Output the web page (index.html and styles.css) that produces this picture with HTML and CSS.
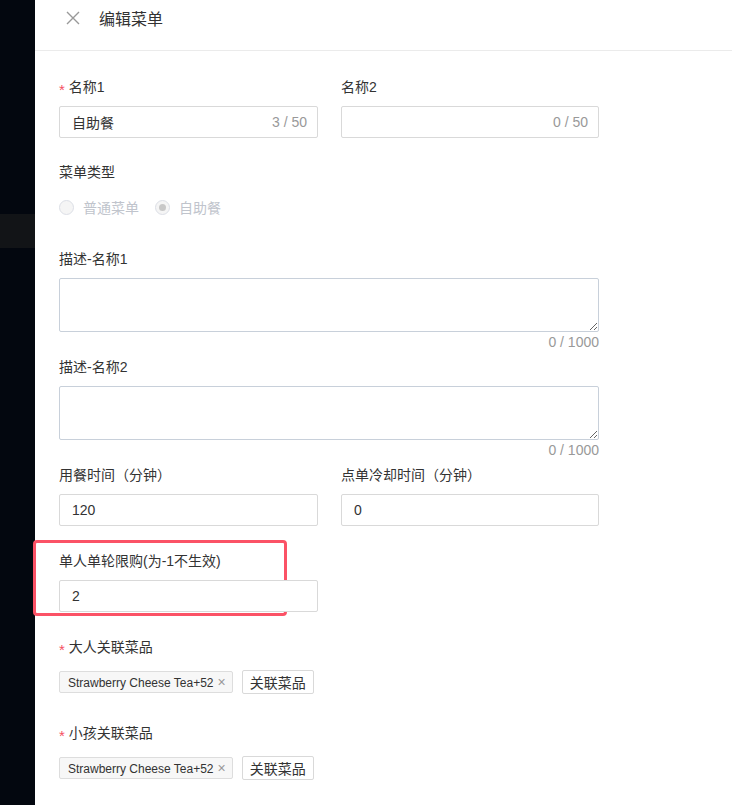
FILE: index.html
```html
<!DOCTYPE html>
<html lang="zh-CN">
<head>
    <meta charset="UTF-8">
    <meta name="viewport" content="width=device-width, initial-scale=1.0">
    <title>编辑菜单</title>
    <link rel="stylesheet" href="styles.css">
</head>
<body>

    <div class="side">
        <div class="side-band"></div>
    </div>

    <div class="drawer">
        <div class="drawer-header">
            <svg class="close-icon" width="14" height="14" viewBox="0 0 14 14">
                <path d="M1 1 L13 13 M13 1 L1 13" stroke="#999" stroke-width="1.4" fill="none"/>
            </svg>
            <span class="drawer-title">编辑菜单</span>
        </div>

        <form class="menu-form">
            <div class="form-row">
                <div class="form-item">
                    <label class="form-label"><span class="required">*</span>名称1</label>
                    <div class="input-box">
                        <input type="text" value="自助餐">
                        <span class="count">3 / 50</span>
                    </div>
                </div>
                <div class="form-item">
                    <label class="form-label">名称2</label>
                    <div class="input-box">
                        <input type="text" value="">
                        <span class="count">0 / 50</span>
                    </div>
                </div>
            </div>

            <div class="form-item radio-item">
                <label class="form-label">菜单类型</label>
                <div class="radio-group">
                    <span class="radio"><span class="radio-dot"></span>普通菜单</span>
                    <span class="radio checked"><span class="radio-dot"></span>自助餐</span>
                </div>
            </div>

            <div class="form-item textarea-item">
                <label class="form-label">描述-名称1</label>
                <textarea></textarea>
                <div class="textarea-count">0 / 1000</div>
            </div>

            <div class="form-item textarea-item">
                <label class="form-label">描述-名称2</label>
                <textarea></textarea>
                <div class="textarea-count">0 / 1000</div>
            </div>

            <div class="form-row">
                <div class="form-item time-item">
                    <label class="form-label">用餐时间（分钟）</label>
                    <div class="input-box"><input type="text" value="120"></div>
                </div>
                <div class="form-item time-item">
                    <label class="form-label">点单冷却时间（分钟）</label>
                    <div class="input-box"><input type="text" value="0"></div>
                </div>
            </div>

            <div class="form-row">
                <div class="form-item highlighted">
                    <div class="highlight-box"></div>
                    <label class="form-label">单人单轮限购(为-1不生效)</label>
                    <div class="input-box"><input type="text" value="2"></div>
                </div>
            </div>

            <div class="form-item tag-item">
                <label class="form-label"><span class="required">*</span>大人关联菜品</label>
                <div class="tag-row">
                    <span class="tag">Strawberry Cheese Tea+52<span class="tag-close">×</span></span>
                    <button type="button" class="link-btn">关联菜品</button>
                </div>
            </div>

            <div class="form-item tag-item">
                <label class="form-label"><span class="required">*</span>小孩关联菜品</label>
                <div class="tag-row">
                    <span class="tag">Strawberry Cheese Tea+52<span class="tag-close">×</span></span>
                    <button type="button" class="link-btn">关联菜品</button>
                </div>
            </div>
        </form>
    </div>

</body>
</html>
```

FILE: styles.css
```css
/* General */
body {
    margin: 0;
    display: flex;
    min-height: 805px;
    background: #03070f;
    font-family: "Liberation Sans", "Noto Sans CJK SC", sans-serif;
    font-size: 14px;
    color: #333;
}

/* Dark strip on the left */
.side {
    width: 35px;
    flex-shrink: 0;
    padding-top: 214px;
}

.side-band {
    height: 34px;
    background: #121417;
}

/* Drawer */
.drawer {
    flex: 1;
    background: white;
}

.drawer-header {
    height: 51px;
    border-bottom: 1px solid #ebebeb;
    display: flex;
    align-items: center;
    padding-left: 31px;
    padding-bottom: 15px;
    box-sizing: border-box;
}

.close-icon {
    margin-right: 19px;
    margin-top: 1px;
}

.drawer-title {
    font-size: 16px;
    color: #333;
}

/* Form */
.menu-form {
    width: 540px;
    padding: 25px 0 0 24px;
}

.form-row {
    display: grid;
    grid-template-columns: 259px 258px;
    column-gap: 23px;
}

.form-item {
    margin-bottom: 23px;
    position: relative;
}

.form-label {
    display: block;
    height: 22px;
    line-height: 22px;
    margin-bottom: 8px;
}

.required {
    color: #f5505f;
    margin-right: 4px;
    font-size: 15px;
    position: relative;
    top: 3px;
}

/* Inputs */
.input-box {
    position: relative;
}

.input-box input {
    width: 100%;
    height: 32px;
    box-sizing: border-box;
    border: 1px solid #d9d9d9;
    border-radius: 2px;
    padding: 0 12px;
    font-family: inherit;
    font-size: 14px;
    color: #333;
    outline: none;
}

.count {
    position: absolute;
    right: 11px;
    top: 0;
    line-height: 32px;
    color: #999;
    font-size: 14px;
}

/* Radios */
.radio-item {
    margin-bottom: 25px;
}

.radio-group {
    height: 32px;
    display: flex;
    align-items: center;
    color: #c0c4cc;
}

.radio {
    display: flex;
    align-items: center;
    margin-right: 16px;
}

.radio-dot {
    width: 15px;
    height: 15px;
    box-sizing: border-box;
    border: 1px solid #dcdfe6;
    border-radius: 50%;
    background: #f5f5f5;
    margin-right: 9px;
    display: flex;
    align-items: center;
    justify-content: center;
}

.radio.checked .radio-dot::after {
    content: "";
    width: 7px;
    height: 7px;
    border-radius: 50%;
    background: #c8c8c8;
}

/* Textareas */
.textarea-item {
    margin-bottom: 3px;
}

.textarea-item textarea {
    display: block;
    width: 100%;
    height: 54px;
    box-sizing: border-box;
    border: 1px solid #c8d0da;
    border-radius: 2px;
    font-family: inherit;
    font-size: 14px;
    padding: 5px 12px;
    outline: none;
}

.textarea-count {
    text-align: right;
    line-height: 21px;
    color: #999;
}

.time-item {
    margin-bottom: 24px;
}

/* Highlight box */
.highlighted {
    margin-bottom: 24px;
}

.highlight-box {
    position: absolute;
    left: -26px;
    top: -10px;
    width: 254px;
    height: 76px;
    box-sizing: border-box;
    border: 3px solid #fb5266;
    border-radius: 4px;
    pointer-events: none;
}

/* Tags */
.tag-item {
    margin-bottom: 28px;
}

.tag-row {
    display: flex;
    align-items: center;
    gap: 9px;
    margin-top: 12px;
}

.tag {
    height: 22px;
    line-height: 20px;
    box-sizing: border-box;
    padding: 0 6px 0 8px;
    border: 1px solid #ddd;
    border-radius: 2px;
    background: #f7f7f7;
    font-size: 12px;
    color: #333;
}

.tag-close {
    color: #999;
    font-size: 14px;
    margin-left: 4px;
}

.link-btn {
    height: 24px;
    padding: 0 7px;
    border: 1px solid #d9d9d9;
    border-radius: 2px;
    background: white;
    font-family: inherit;
    font-size: 14px;
    color: #333;
    cursor: pointer;
}
```
